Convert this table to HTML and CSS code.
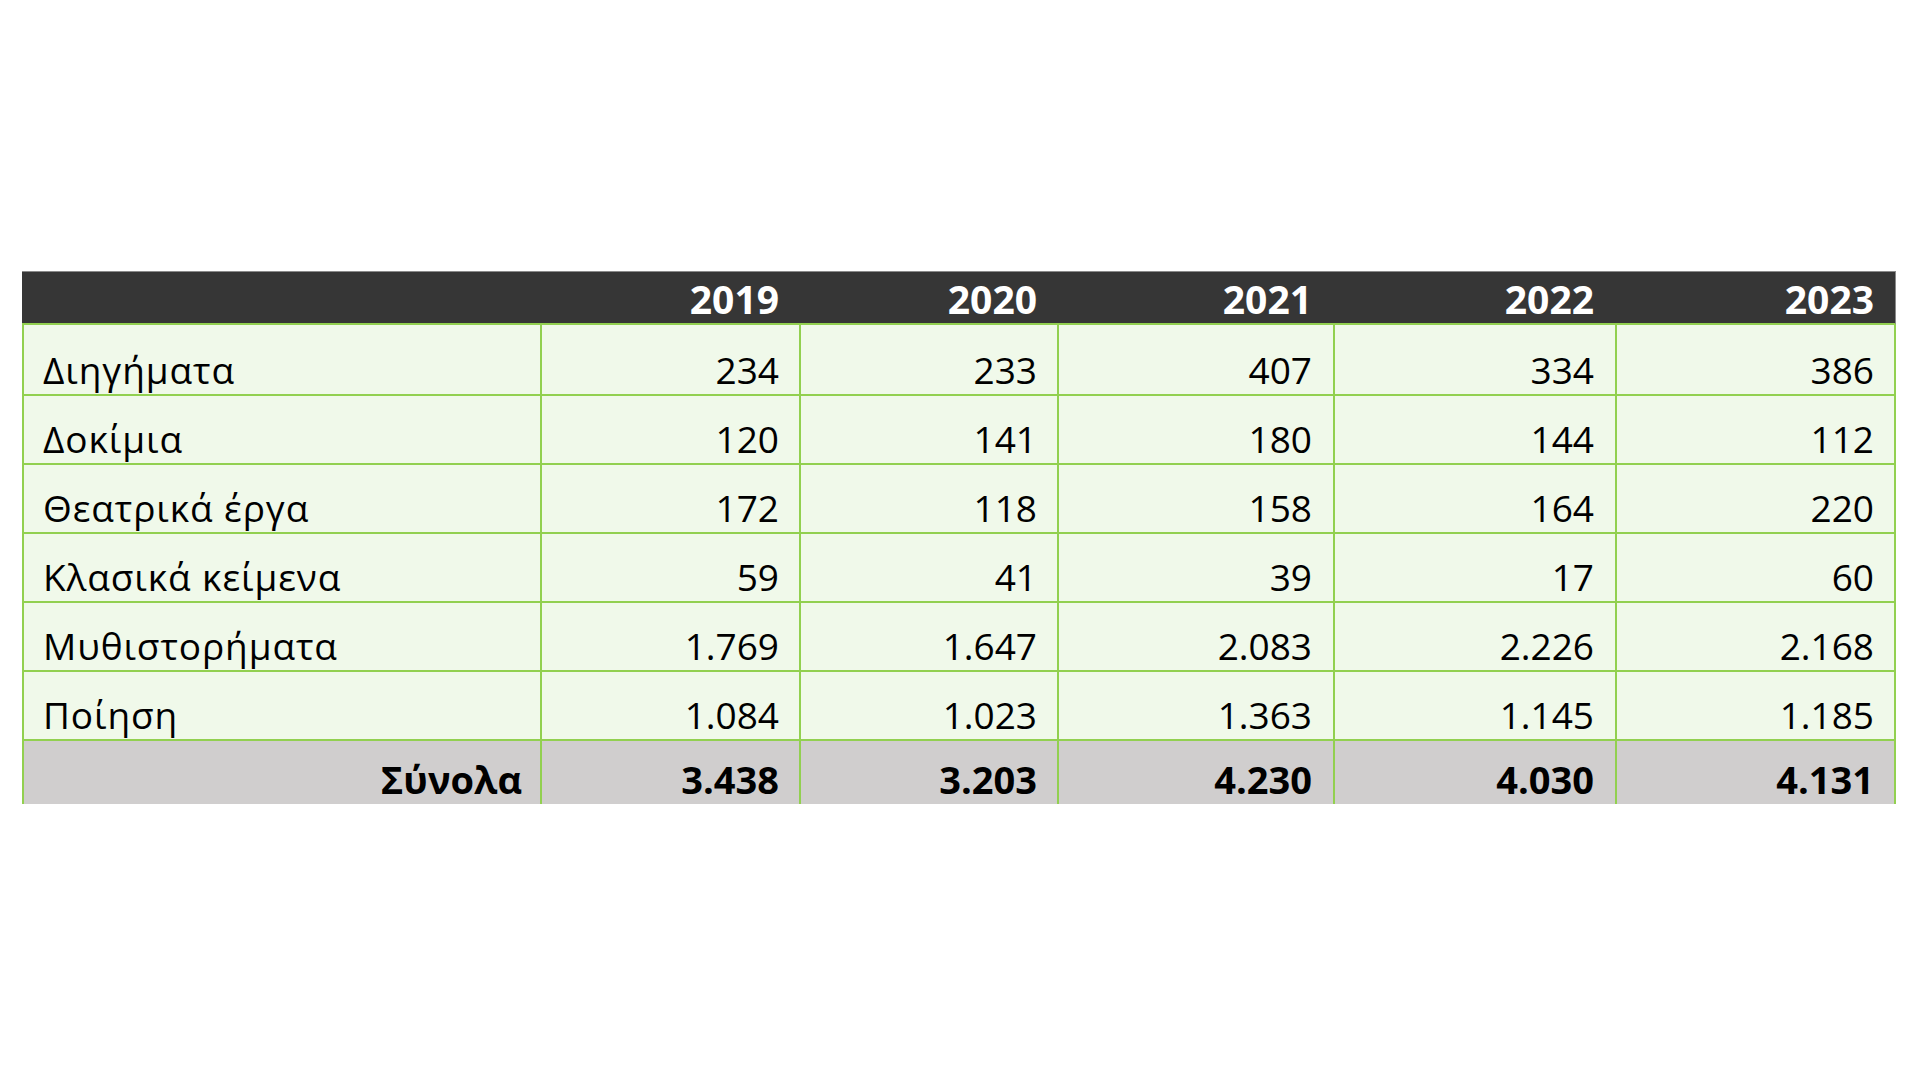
FILE: index.html
```html
<!DOCTYPE html>
<html lang="el">
<head>
<meta charset="utf-8">
<title>Πίνακας</title>
<link rel="stylesheet" href="styles.css">
</head>
<body>
<div class="page">
  <div class="sheet">
    <div class="hd label"></div>
    <div class="hd num c1">2019</div>
    <div class="hd num c2">2020</div>
    <div class="hd num c3">2021</div>
    <div class="hd num c4">2022</div>
    <div class="hd num c5 last">2023</div>

    <div class="cell label">Διηγήματα</div>
    <div class="cell num c1">234</div>
    <div class="cell num c2">233</div>
    <div class="cell num c3">407</div>
    <div class="cell num c4">334</div>
    <div class="cell num c5">386</div>

    <div class="cell label">Δοκίμια</div>
    <div class="cell num c1">120</div>
    <div class="cell num c2">141</div>
    <div class="cell num c3">180</div>
    <div class="cell num c4">144</div>
    <div class="cell num c5">112</div>

    <div class="cell label">Θεατρικά έργα</div>
    <div class="cell num c1">172</div>
    <div class="cell num c2">118</div>
    <div class="cell num c3">158</div>
    <div class="cell num c4">164</div>
    <div class="cell num c5">220</div>

    <div class="cell label">Κλασικά κείμενα</div>
    <div class="cell num c1">59</div>
    <div class="cell num c2">41</div>
    <div class="cell num c3">39</div>
    <div class="cell num c4">17</div>
    <div class="cell num c5">60</div>

    <div class="cell label">Μυθιστορήματα</div>
    <div class="cell num c1">1.769</div>
    <div class="cell num c2">1.647</div>
    <div class="cell num c3">2.083</div>
    <div class="cell num c4">2.226</div>
    <div class="cell num c5">2.168</div>

    <div class="cell label">Ποίηση</div>
    <div class="cell num c1">1.084</div>
    <div class="cell num c2">1.023</div>
    <div class="cell num c3">1.363</div>
    <div class="cell num c4">1.145</div>
    <div class="cell num c5">1.185</div>

    <div class="cell total label">Σύνολα</div>
    <div class="cell total num c1">3.438</div>
    <div class="cell total num c2">3.203</div>
    <div class="cell total num c3">4.230</div>
    <div class="cell total num c4">4.030</div>
    <div class="cell total num c5">4.131</div>
  </div>
</div>
</body>
</html>
```
FILE: styles.css
```css
* {
  box-sizing: border-box;
}

html, body {
  margin: 0;
  padding: 0;
  background: #ffffff;
}

body {
  font-family: "Open Sans", "Noto Sans", "DejaVu Sans", sans-serif;
  color: #000000;
}

.page {
  padding: 271px 0 0 22px;
  width: 1920px;
  height: 1080px;
}

.sheet {
  display: grid;
  width: 1874px;
  grid-template-columns: 520px 259px 258px 276px 282px 279px;
  grid-template-rows: 54px 71px 69px 69px 69px 69px 69px 63px;
}

.hd {
  background: #363636;
  color: #ffffff;
  font-weight: 700;
  font-size: 39px;
  line-height: 1;
  border-top: 1px solid #8a8a8a;
  border-bottom: 2px solid #92d050;
  display: flex;
  align-items: flex-end;
  justify-content: flex-end;
  padding-bottom: 5px;
}

.hd.last {
  border-right: 1px solid #8a8a8a;
}

.cell {
  background: #f0f9ea;
  font-size: 37px;
  line-height: 1;
  border-right: 2px solid #92d050;
  border-bottom: 2px solid #92d050;
  display: flex;
  align-items: flex-end;
  padding-bottom: 6px;
}

.cell.label {
  border-left: 2px solid #92d050;
  padding-left: 19px;
  letter-spacing: 0.9px;
}

.num {
  justify-content: flex-end;
}

.c1, .c2 {
  padding-right: 20px;
}

.c3 {
  padding-right: 21px;
}

.c4 {
  padding-right: 21px;
}

.c5 {
  padding-right: 20px;
}

.hd.c1, .hd.c2 {
  padding-right: 22px;
}

.hd.c3 {
  padding-right: 23px;
}

.hd.c4 {
  padding-right: 23px;
}

.hd.c5 {
  padding-right: 21px;
}

.cell.total {
  background: #d0cece;
  font-weight: 700;
  font-size: 38px;
  border-bottom: none;
  padding-bottom: 6px;
}

.cell.total.label {
  justify-content: flex-end;
  padding-right: 18px;
  letter-spacing: 0;
}
```
